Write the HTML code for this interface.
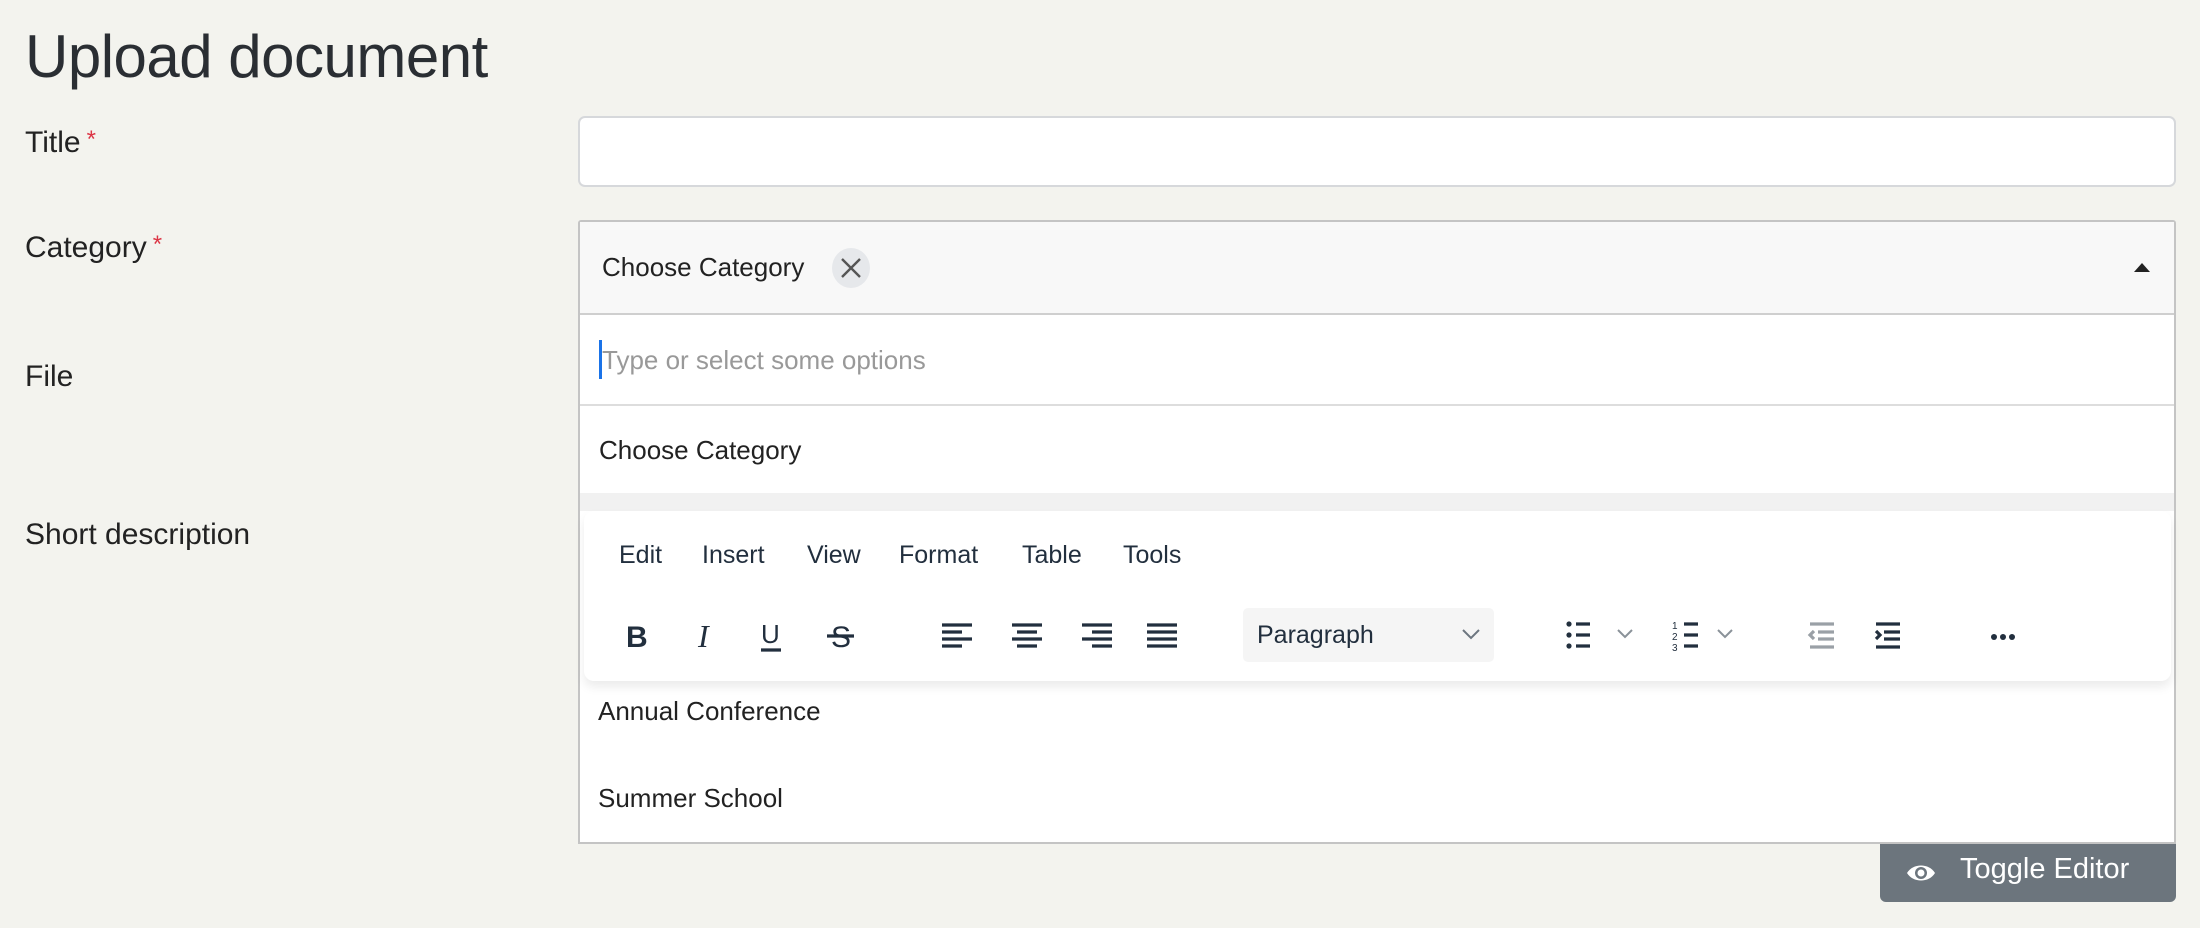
<!DOCTYPE html>
<html><head><meta charset="utf-8"><style>
*{box-sizing:border-box;margin:0;padding:0}
body{width:2200px;height:928px;background:#f3f3ee;font-family:"Liberation Sans",sans-serif;color:#212529;position:relative;overflow:hidden}
.a{position:absolute;white-space:nowrap}
.lbl{font-size:30px;color:#222}
.req{color:#dc3545;font-size:24px;vertical-align:top;margin-left:6px}
.menu{font-size:25px;color:#222f3e;top:541px}
</style></head><body>
<div class="a" style="left:25px;top:22px;font-size:60px;font-weight:300;color:#2a2e33;letter-spacing:-0.5px">Upload document</div>
<div class="a lbl" style="left:25px;top:126px">Title<span class="req">*</span></div>
<div class="a lbl" style="left:25px;top:231px">Category<span class="req">*</span></div>
<div class="a lbl" style="left:25px;top:360px">File</div>
<div class="a lbl" style="left:25px;top:518px">Short description</div>

<div class="a" style="left:578px;top:116px;width:1598px;height:71px;background:#fff;border:2px solid #d6d8db;border-radius:7px"></div>

<div class="a" style="left:578px;top:220px;width:1598px;height:624px;background:#fff;border:2px solid #c4c4c4;border-radius:3px 3px 0 0"></div>
<div class="a" style="left:580px;top:222px;width:1594px;height:93px;background:#f8f8f8;border-bottom:2px solid #cfcfcf"></div>
<div class="a" style="left:602px;top:252px;font-size:26px;color:#222">Choose Category</div>
<div class="a" style="left:832px;top:248px;width:38px;height:40px;border-radius:50%;background:#e6e8eb"></div>
<svg class="a" style="left:839px;top:256px" width="24" height="24" viewBox="0 0 24 24"><path d="M3 3L21 21M21 3L3 21" stroke="#555" stroke-width="2.4"/></svg>
<svg class="a" style="left:2132px;top:260px" width="20" height="14" viewBox="0 0 20 14"><path d="M2 12L10 3L18 12Z" fill="#222"/></svg>
<div class="a" style="left:599px;top:340px;width:3px;height:39px;background:#1a73e8"></div>
<div class="a" style="left:602px;top:345px;font-size:26px;color:#999">Type or select some options</div>
<div class="a" style="left:580px;top:404px;width:1594px;height:2px;background:#ddd"></div>
<div class="a" style="left:599px;top:435px;font-size:26px;color:#222">Choose Category</div>
<div class="a" style="left:580px;top:493px;width:1594px;height:18px;background:#f1f1f1"></div>

<div class="a" style="left:584px;top:511px;width:1587px;height:170px;background:#fff;border-radius:10px;box-shadow:0 6px 10px rgba(0,0,0,0.08)"></div>
<div class="a menu" style="left:619px">Edit</div>
<div class="a menu" style="left:702px">Insert</div>
<div class="a menu" style="left:807px">View</div>
<div class="a menu" style="left:899px">Format</div>
<div class="a menu" style="left:1022px">Table</div>
<div class="a menu" style="left:1123px">Tools</div>

<svg class="a" style="left:620px;top:615px" width="600" height="40" viewBox="0 0 600 40" fill="none" stroke="#222f3e" stroke-width="3.2">
<text x="6" y="32" font-family="Liberation Sans" font-weight="bold" font-size="30" fill="#222f3e" stroke="none">B</text>
<text x="78" y="32" font-family="Liberation Serif" font-style="italic" font-size="32" fill="#222f3e" stroke="none">I</text>
<text x="141" y="28" font-family="Liberation Sans" font-size="26" fill="#222f3e" stroke="none">U</text>
<path d="M141 35H161"/>
<text x="211" y="32" font-family="Liberation Sans" font-size="30" fill="#222f3e" stroke="none">S</text>
<path d="M207 21H234"/>
<path d="M322 10H352M322 17H342M322 24H352M322 31H342"/>
<path d="M392 10H422M397 17H417M392 24H422M397 31H417"/>
<path d="M462 10H492M472 17H492M462 24H492M472 31H492"/>
<path d="M527 10H557M527 17H557M527 24H557M527 31H557"/>
</svg>
<div class="a" style="left:1243px;top:608px;width:251px;height:54px;background:#f5f5f5;border-radius:5px"></div>
<div class="a" style="left:1257px;top:621px;font-size:25px;color:#222f3e">Paragraph</div>
<svg class="a" style="left:1460px;top:626px;width:22px;height:16px" viewBox="0 0 22 16" fill="none" stroke="#6d7680" stroke-width="2"><path d="M3 4L11 12L19 4"/></svg>
<svg class="a" style="left:1560px;top:615px" width="470" height="40" viewBox="0 0 470 40" fill="none" stroke-width="3.2">
<g fill="#222f3e"><circle cx="9" cy="9" r="2.6"/><circle cx="9" cy="20" r="2.6"/><circle cx="9" cy="31" r="2.6"/></g>
<g stroke="#222f3e"><path d="M16 9H30M16 20H30M16 31H30"/></g>
<path d="M58 15L65 22L72 15" stroke="#8a9299" stroke-width="2"/>
<g stroke="#222f3e"><path d="M124 9H138M124 20H138M124 31H138"/></g>
<text x="112" y="14" font-size="10" fill="#222f3e" font-family="Liberation Sans">1</text>
<text x="112" y="25" font-size="10" fill="#222f3e" font-family="Liberation Sans">2</text>
<text x="112" y="36" font-size="10" fill="#222f3e" font-family="Liberation Sans">3</text>
<path d="M158 15L165 22L172 15" stroke="#8a9299" stroke-width="2"/>
<g stroke="#9aa0a6"><path d="M250 9H274M258 17H274M258 24H274M250 32H274M254 16L250 20L254 24"/></g>
<g stroke="#222f3e"><path d="M316 9H340M324 17H340M324 24H340M316 32H340M316 16L320 20L316 24"/></g>
<circle cx="434" cy="22" r="3" fill="#222f3e" stroke="none"/><circle cx="443" cy="22" r="3" fill="#222f3e" stroke="none"/><circle cx="452" cy="22" r="3" fill="#222f3e" stroke="none"/>
</svg>

<div class="a" style="left:598px;top:696px;font-size:26px;color:#222">Annual Conference</div>
<div class="a" style="left:598px;top:783px;font-size:26px;color:#222">Summer School</div>

<div class="a" style="left:1880px;top:844px;width:296px;height:58px;background:#6c757d;border-radius:0 0 6px 6px"></div>
<svg class="a" style="left:1905px;top:860px" width="32" height="26" viewBox="0 0 32 26"><path d="M2 13C8 3 24 3 30 13C24 23 8 23 2 13Z" fill="#fff"/><circle cx="16" cy="13" r="6" fill="#6c757d"/><circle cx="16" cy="13" r="3.5" fill="#fff"/></svg>
<div class="a" style="left:1960px;top:853px;font-size:29px;color:#fff">Toggle Editor</div>
</body></html>
